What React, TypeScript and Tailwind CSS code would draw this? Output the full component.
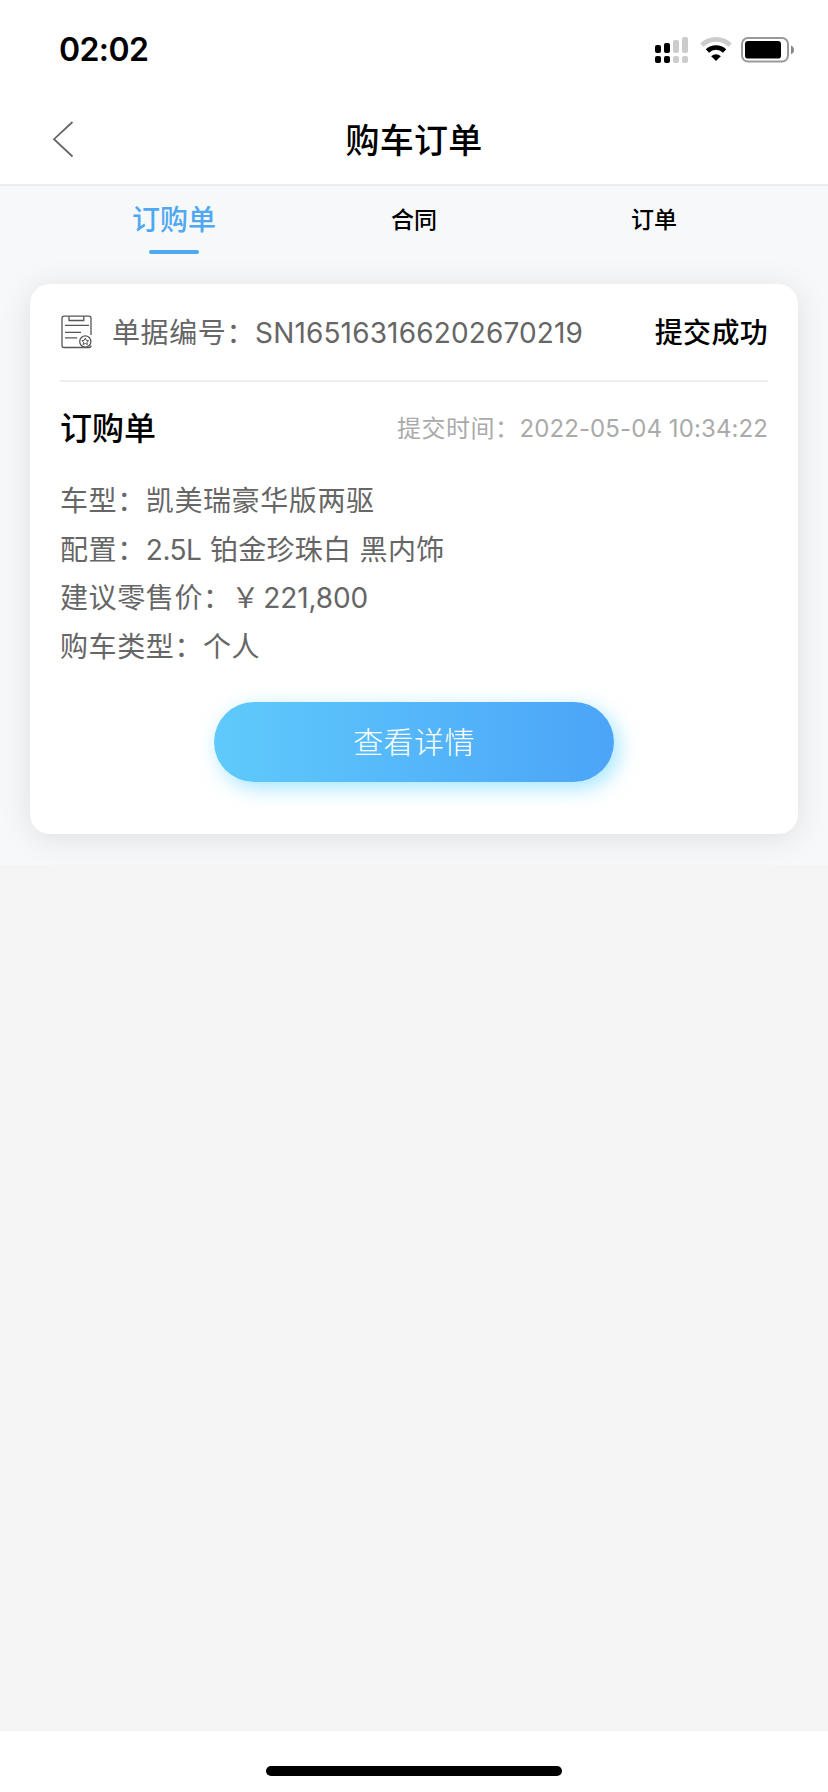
import { useState } from "react";
import clsx from "clsx";

const tabs = ["订购单", "合同", "订单"];

const order = {
  sn: "SN165163166202670219",
  status: "提交成功",
  title: "订购单",
  submittedAt: "2022-05-04 10:34:22",
  model: "凯美瑞豪华版两驱",
  engine: "2.5L",
  trim: "铂金珍珠白 黑内饰",
  price: "221,800",
  buyerType: "个人",
};

function SignalIcon() {
  return (
    <svg width="33" height="26" viewBox="0 0 33 26">
      <rect x="0" y="8" width="6" height="8" rx="2" fill="#000" />
      <rect x="9" y="6" width="6" height="10" rx="2" fill="#000" />
      <rect x="18" y="3" width="6" height="13" rx="2" fill="#ccc" />
      <rect x="27" y="0" width="6" height="16" rx="2" fill="#ccc" />
      <rect x="0" y="19" width="6" height="7" rx="2" fill="#000" />
      <rect x="9" y="19" width="6" height="7" rx="2" fill="#000" />
      <rect x="18" y="19" width="6" height="7" rx="2" fill="#ccc" />
      <rect x="27" y="19" width="6" height="7" rx="2" fill="#ccc" />
    </svg>
  );
}

function WifiIcon() {
  return (
    <svg width="32" height="24" viewBox="0 0 32 24">
      <path d="M1.900 8.200a20 20 0 0 1 28.200 0" fill="none" stroke="#ccc" strokeWidth="4.600" />
      <path d="M7.400 14a12.200 12.200 0 0 1 17.200 0" fill="none" stroke="#000" strokeWidth="4.600" />
      <path d="M16 24l-4.800-4.800a6.800 6.800 0 0 1 9.600 0z" fill="#000" />
    </svg>
  );
}

function BatteryIcon() {
  return (
    <svg width="54" height="26" viewBox="0 0 54 26">
      <rect x="1" y="1" width="46" height="23.600" rx="6" fill="none" stroke="#999" strokeWidth="2" />
      <rect x="4" y="4" width="36" height="17.600" rx="3.200" fill="#000" />
      <path d="M50 8.400c2 .8 3 2.400 3 4.400s-1 3.600-3 4.400z" fill="#888" />
    </svg>
  );
}

function DocumentIcon() {
  return (
    <svg width="32" height="34" viewBox="0 0 32 34" fill="none" stroke="#555" strokeWidth="1.300">
      <path d="M30 20V3.200Q30 1.200 28 1.200H3Q1 1.200 1 3.200V30.500Q1 32.500 3 32.500H28Q30 32.500 30 30.500" />
      <path d="M8 1.500V5.500H22.800V1.500" />
      <path d="M4 10.400H28M4 17.300H20M4 22.800H16.200" />
      <circle cx="24.300" cy="26.500" r="5.600" fill="#fff" />
      <path
        d="M24.300 23.100l1 2.200 2.400.3-1.800 1.600.5 2.400-2.100-1.200-2.100 1.200.5-2.400-1.800-1.600 2.400-.3z"
        strokeWidth="1"
      />
    </svg>
  );
}

function StatusBar() {
  return (
    <div className="flex h-[94px] justify-between pr-[33px] pl-[59px]">
      <span className="mt-[30px] text-[32px] leading-10 font-semibold tracking-[-0.6px]">02:02</span>
      <div className="mt-[37px] flex items-start">
        <SignalIcon />
        <div className="ml-3">
          <WifiIcon />
        </div>
        <div className="ml-[9px]">
          <BatteryIcon />
        </div>
      </div>
    </div>
  );
}

function OrderCard() {
  return (
    <section className="mx-[30px] h-[550px] rounded-[20px] bg-white px-[30px] shadow-[0_4px_32px_rgba(0,0,0,0.1)]">
      <div className="flex h-[98px] items-center border-b-2 border-[#eee] pt-0.5 text-[28px]">
        <div className="mb-0.5 ml-px">
          <DocumentIcon />
        </div>
        <p className="ml-[19px] tracking-[0.6px] whitespace-nowrap text-[#666]">
          单据编号：<span className="tracking-[0.15px]">{order.sn}</span>
        </p>
        <span className="ml-auto font-medium tracking-[0.3px]">{order.status}</span>
      </div>

      <div className="flex h-[92px] items-center justify-between pt-0.5">
        <h2 className="text-[32px] font-medium">{order.title}</h2>
        <p className="text-2xl tracking-[0.5px] text-[#aaa]">
          提交时间：<span className="tracking-[0.1px]">{order.submittedAt}</span>
        </p>
      </div>

      <div className="mt-[3px] text-[28px] leading-[48.600px] tracking-[0.6px] text-[#666]">
        <p>车型：{order.model}</p>
        <p>
          配置：<span className="tracking-[-0.5px]">{order.engine}</span>{" "}
          <span className="tracking-[0.3px]">{order.trim}</span>
        </p>
        <p>
          建议零售价：￥<span className="ml-[3px] tracking-[-0.1px]">{order.price}</span>
        </p>
        <p>购车类型：{order.buyerType}</p>
      </div>

      <button className="mx-auto mt-[30.600px] block h-20 w-[400px] rounded-full bg-linear-to-r from-[#5fcafb] to-[#4ca4f8] pt-0.5 text-[30px] font-light tracking-[0.4px] text-white shadow-[5px_6px_20px_rgba(90,210,255,0.55)]">
        查看详情
      </button>
    </section>
  );
}

export default function App() {
  const [active, setActive] = useState(0);

  return (
    <div className="flex h-[1792px] w-[828px] flex-col bg-[#f5f5f5] font-[Inter,'Noto_Sans_CJK_SC',sans-serif] text-black">
      <header className="h-[186px] border-b-2 border-[#ececec] bg-white">
        <StatusBar />
        <div className="grid h-[90px] grid-cols-[1fr_auto_1fr] items-center">
          <button className="ml-[52px] w-6" aria-label="返回">
            <svg width="24" height="38" viewBox="0 0 24 38" fill="none" stroke="#666" strokeWidth="1.800">
              <path d="M20.500 2L2 19.200L20.500 36.500" />
            </svg>
          </button>
          <h1 className="pt-0.5 text-[34px] font-medium tracking-[0.3px]">购车订单</h1>
        </div>
      </header>

      <main className="h-[679px] overflow-hidden bg-[#f7f8fa]">
        <nav className="mx-[54px] mb-[29px] grid h-[69px] grid-cols-3">
          {tabs.map((tab, index) => (
            <button
              key={tab}
              className="flex flex-col items-center"
              onClick={() => setActive(index)}
            >
              <span
                className={clsx(
                  "mt-[14px] leading-10 font-medium",
                  index === active ? "text-[28px] text-[#4fa8f0]" : "text-[23px]"
                )}
              >
                {tab}
              </span>
              {index === active && <i className="mt-[10px] h-1 w-[50px] rounded-full bg-[#4fa8f0]" />}
            </button>
          ))}
        </nav>
        <OrderCard />
      </main>

      <footer className="mt-auto flex h-[61px] justify-center bg-white pt-[35px]">
        <div className="h-[10px] w-[296px] rounded-full bg-black" />
      </footer>
    </div>
  );
}
